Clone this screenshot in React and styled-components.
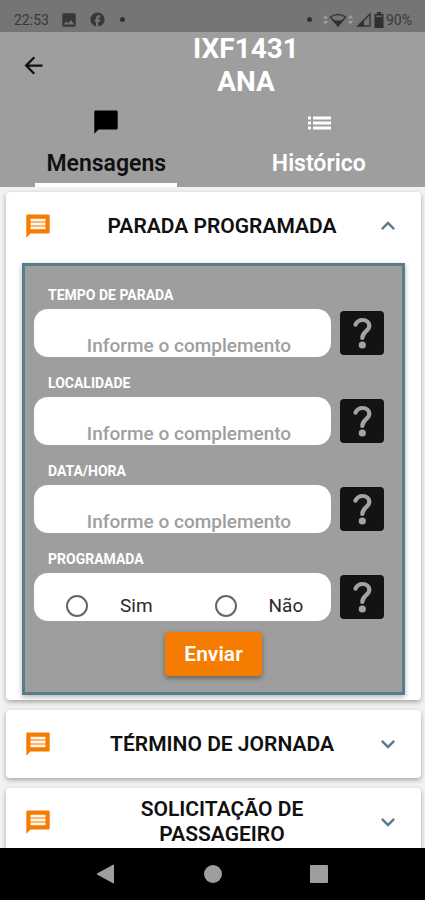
import React, { useState } from "react";
import styled, { createGlobalStyle } from "styled-components";
import {
  MdArrowBack,
  MdExpandLess,
  MdExpandMore,
  MdFacebook,
  MdImage,
} from "react-icons/md";

const colors = {
  status: "#757575",
  gray: "#9e9e9e",
  slate: "#5b7b8b",
  orange: "#f57c00",
  ink: "#101010",
};

const GlobalStyle = createGlobalStyle`
  *, *::before, *::after { box-sizing: border-box; }
  body { margin: 0; background: #f2f2f2; }
  button, input { font: inherit; color: inherit; }
  button { border: 0; padding: 0; background: none; cursor: pointer; }
  svg { display: block; flex: none; }
`;

const Screen = styled.div`
  display: flex;
  flex-direction: column;
  height: 100vh;
  font-family: Roboto, "Liberation Sans", sans-serif;
  background: #f2f2f2;
`;

const StatusBar = styled.div`
  display: flex;
  flex: none;
  justify-content: space-between;
  align-items: center;
  height: 32px;
  padding: 7px 13px 0 14px;
  background: ${colors.status};
  color: #383838;
  font-size: 14px;
  line-height: 16px;
`;

const StatusGroup = styled.div`
  display: flex;
  align-items: center;
  gap: ${(p) => p.$gap}px;
`;

const Dot = styled.span`
  width: 5px;
  height: 5px;
  margin: 0 ${(p) => p.$space || 0}px;
  border-radius: 50%;
  background: #303030;
`;

const Header = styled.header`
  flex: none;
  background: ${colors.gray};
`;

const TitleRow = styled.div`
  display: flex;
  align-items: center;
`;

const BackButton = styled.button`
  display: flex;
  justify-content: center;
  align-items: center;
  width: 67px;
  height: 66px;
`;

const Title = styled.h1`
  flex: 1;
  margin: 0;
  color: #fff;
  font-size: 28px;
  font-weight: 700;
  line-height: 33px;
  text-align: center;
`;

const TitleLine = styled.span`
  display: block;
`;

const Tabs = styled.div`
  display: grid;
  grid-template-columns: 1fr 1fr;
`;

const Tab = styled.button`
  display: flex;
  flex-direction: column;
  align-items: center;
  padding-top: 8px;
  color: ${(p) => (p.$active ? colors.ink : "#fff")};
  font-size: 23px;
  font-weight: 600;
  line-height: 28px;
  &::after {
    content: "";
    width: 67%;
    height: 4px;
    margin-top: 5px;
    background: ${(p) => (p.$active ? "#fff" : "transparent")};
  }
`;

const TabIcon = styled.span`
  display: flex;
  align-items: center;
  height: 32px;
  margin-bottom: 12px;
  color: ${(p) => (p.$active ? "#000" : "#fff")};
`;

const Content = styled.main`
  display: flex;
  flex: 1;
  flex-direction: column;
  gap: 10px;
  min-height: 0;
  padding: 5px 4px 10px 6px;
  overflow-y: auto;
  scrollbar-width: none;
`;

const Card = styled.section`
  flex: none;
  border-radius: 4px;
  background: #fff;
  box-shadow: 0 2px 5px rgba(0, 0, 0, 0.32);
`;

const CardHeader = styled.button`
  display: flex;
  align-items: center;
  width: 100%;
  min-height: 68px;
  padding: 0 19px 0 18px;
  color: ${colors.slate};
`;

const CardIcon = styled.span`
  color: ${colors.orange};
`;

const CardTitle = styled.span`
  flex: 1;
  padding: 0 10px 0 28px;
  color: ${colors.ink};
  font-size: 21px;
  font-weight: 600;
  line-height: 25px;
  text-align: center;
`;

const CardBody = styled.div`
  padding: 3px 16px 5px;
`;

const Form = styled.form`
  display: flex;
  flex-direction: column;
  gap: 11px;
  padding: 17px 18px 16px 9px;
  border: 3px solid ${colors.slate};
  background: ${colors.gray};
  box-shadow: 0 2px 5px rgba(0, 0, 0, 0.3);
`;

const Fields = styled.div`
  display: flex;
  flex-direction: column;
  gap: 14px;
`;

const Field = styled.div`
  display: flex;
  flex-direction: column;
  gap: 2px;
`;

const FieldLabel = styled.label`
  padding-left: 14px;
  color: #fff;
  font-size: 14px;
  font-weight: 700;
  line-height: 24px;
`;

const FieldRow = styled.div`
  display: flex;
  align-items: center;
  gap: 9px;
`;

const TextBox = styled.input`
  flex: 1;
  min-width: 0;
  height: 48px;
  padding: 24px 0 0 13px;
  border: 0;
  border-radius: 14px;
  outline: 0;
  background: #fff;
  color: ${colors.ink};
  font-size: 19px;
  font-weight: 500;
  text-align: center;
  &::placeholder {
    color: ${colors.gray};
    opacity: 1;
  }
`;

const Choices = styled.div`
  display: grid;
  flex: 1;
  grid-template-columns: 1fr 1fr;
  height: 48px;
  padding-top: 18px;
  border-radius: 14px;
  background: #fff;
`;

const Choice = styled.label`
  display: flex;
  align-items: center;
  gap: 32px;
  padding-left: 32px;
  color: #2a2a2a;
  font-size: 19px;
  line-height: 30px;
`;

const Radio = styled.input`
  appearance: none;
  width: 22px;
  height: 22px;
  margin: 0;
  border: 2px solid #666;
  border-radius: 50%;
  &:checked {
    background: radial-gradient(${colors.orange} 45%, transparent 50%);
  }
`;

const HelpButton = styled.button`
  flex: none;
  width: 44px;
  height: 44px;
  border-radius: 4px;
  background: #131313;
`;

const SubmitButton = styled.button`
  align-self: center;
  height: 44px;
  margin-left: 9px;
  padding: 0 19px;
  border-radius: 4px;
  background: ${colors.orange};
  box-shadow: 0 2px 5px rgba(0, 0, 0, 0.4);
  color: #fff;
  font-size: 21px;
  font-weight: 600;
`;

const SystemNav = styled.nav`
  display: grid;
  flex: none;
  grid-template-columns: repeat(3, 25%);
  justify-content: center;
  height: 52px;
  background: #000;
`;

const NavButton = styled.button`
  display: flex;
  justify-content: center;
  align-items: center;
`;

function Wifi() {
  return (
    <svg width="30" height="16" viewBox="0 0 30 16" aria-hidden="true">
      <path d="M0 6.500L2.500 3L5 6.500ZM0 9L2.500 12.500L5 9ZM25 6.500L27.500 3L30 6.500ZM25 9L27.500 12.500L30 9Z" fill="#a0a0a0" />
      <path d="M7.500 5C12 1.500 18 1.500 22.500 5L15 14Z" fill="none" stroke="#383838" strokeWidth="1.500" />
      <path d="M8.500 7C12.500 9 17.500 9 21.500 7L15 14Z" fill="#303030" />
    </svg>
  );
}

function Signal() {
  return (
    <svg width="15" height="15" viewBox="0 0 15 15" aria-hidden="true">
      <path d="M2 14L14 2V14Z" fill="none" stroke="#383838" strokeWidth="1.500" />
      <path d="M1 14.500L8 7.500V14.500Z" fill="#303030" />
    </svg>
  );
}

function Battery() {
  return (
    <svg width="10" height="16" viewBox="0 0 10 16" aria-hidden="true">
      <path d="M3 0H7V2H9.500V16H0.500V2H3Z" fill="#303030" />
      <path d="M2 3.500H8V5H2Z" fill="#666" />
    </svg>
  );
}

function Bubble({ lined }) {
  return (
    <svg width="28" height="28" viewBox="0 0 28 28" fill="currentColor" aria-hidden="true">
      <path d="M3.500 2.500H24.500Q25.700 2.500 25.700 3.700V20.300Q25.700 21.500 24.500 21.500H6.500L2.300 25.700V3.700Q2.300 2.500 3.500 2.500Z" />
      {lined && <path d="M6.500 6.800H21.500V9.600H6.500ZM6.500 10.600H21.500V13.400H6.500ZM6.500 14.400H21.500V17.200H6.500Z" fill="#fff6e8" />}
    </svg>
  );
}

function ListIcon() {
  return (
    <svg width="24" height="24" viewBox="0 0 24 24" fill="currentColor" aria-hidden="true">
      <path d="M1 6.500H4V9.500H1ZM1 11.500H4V14.500H1ZM1 16.500H4V19.500H1ZM6 6.500H24V9.500H6ZM6 11.500H24V14.500H6ZM6 16.500H24V19.500H6Z" />
    </svg>
  );
}

function Help({ field }) {
  return (
    <HelpButton type="button" aria-label={`Ajuda: ${field}`}>
      <svg width="44" height="44" viewBox="0 0 44 44" aria-hidden="true">
        <path
          d="M15.500 13.500C17 10.500 19.500 9 22.500 9C26.500 9 29.300 11.500 29.300 15C29.300 20 22.300 20.500 22.300 27"
          fill="none"
          stroke="#a3a3a3"
          strokeWidth="4.200"
          strokeLinecap="round"
        />
        <circle cx="22.300" cy="34" r="3.600" fill="#a3a3a3" />
      </svg>
    </HelpButton>
  );
}

function TextField({ id, label }) {
  return (
    <Field>
      <FieldLabel htmlFor={id}>{label}</FieldLabel>
      <FieldRow>
        <TextBox id={id} type="text" placeholder="Informe o complemento" />
        <Help field={label} />
      </FieldRow>
    </Field>
  );
}

function StopForm() {
  return (
    <Form onSubmit={(e) => e.preventDefault()}>
      <Fields>
        <TextField id="tempo" label="TEMPO DE PARADA" />
        <TextField id="localidade" label="LOCALIDADE" />
        <TextField id="data" label="DATA/HORA" />
        <Field>
          <FieldLabel as="div" id="programada">PROGRAMADA</FieldLabel>
          <FieldRow>
            <Choices role="radiogroup" aria-labelledby="programada">
              <Choice>
                <Radio type="radio" name="programada" value="sim" />
                Sim
              </Choice>
              <Choice>
                <Radio type="radio" name="programada" value="nao" />
                Não
              </Choice>
            </Choices>
            <Help field="PROGRAMADA" />
          </FieldRow>
        </Field>
      </Fields>
      <SubmitButton type="submit">Enviar</SubmitButton>
    </Form>
  );
}

function MessageCard({ title, open, onToggle, children }) {
  const Chevron = open ? MdExpandLess : MdExpandMore;
  return (
    <Card>
      <CardHeader type="button" aria-expanded={open} onClick={onToggle}>
        <CardIcon>
          <Bubble lined />
        </CardIcon>
        <CardTitle>{title}</CardTitle>
        <Chevron size={28} />
      </CardHeader>
      {open && children && <CardBody>{children}</CardBody>}
    </Card>
  );
}

const messages = [
  { title: "PARADA PROGRAMADA", body: <StopForm /> },
  { title: "TÉRMINO DE JORNADA" },
  { title: "SOLICITAÇÃO DE PASSAGEIRO" },
];

export default function App() {
  const [tab, setTab] = useState(0);
  const [open, setOpen] = useState(0);
  return (
    <Screen>
      <GlobalStyle />
      <StatusBar>
        <StatusGroup $gap={11}>
          <span>22:53</span>
          <MdImage size={18} />
          <MdFacebook size={17} />
          <Dot $space={3} />
        </StatusGroup>
        <StatusGroup $gap={3}>
          <Dot $space={8} />
          <Wifi />
          <Signal />
          <StatusGroup $gap={2}>
            <Battery />
            <span>90%</span>
          </StatusGroup>
        </StatusGroup>
      </StatusBar>
      <Header>
        <TitleRow>
          <BackButton type="button" aria-label="Voltar">
            <MdArrowBack size={27} color="#101010" />
          </BackButton>
          <Title>
            <TitleLine>IXF1431</TitleLine>
            <TitleLine>ANA</TitleLine>
          </Title>
        </TitleRow>
        <Tabs role="tablist">
          <Tab type="button" role="tab" aria-selected={tab === 0} $active={tab === 0} onClick={() => setTab(0)}>
            <TabIcon $active={tab === 0}>
              <Bubble />
            </TabIcon>
            Mensagens
          </Tab>
          <Tab type="button" role="tab" aria-selected={tab === 1} $active={tab === 1} onClick={() => setTab(1)}>
            <TabIcon $active={tab === 1}>
              <ListIcon />
            </TabIcon>
            Histórico
          </Tab>
        </Tabs>
      </Header>
      <Content>
        {messages.map((m, i) => (
          <MessageCard key={m.title} title={m.title} open={open === i} onToggle={() => setOpen(open === i ? -1 : i)}>
            {m.body}
          </MessageCard>
        ))}
      </Content>
      <SystemNav>
        <NavButton type="button" aria-label="Voltar">
          <svg width="20" height="20" viewBox="0 0 20 20">
            <path d="M1 10L17.500 1V19Z" fill="#9e9e9e" stroke="#9e9e9e" strokeLinejoin="round" />
          </svg>
        </NavButton>
        <NavButton type="button" aria-label="Início">
          <svg width="20" height="20" viewBox="0 0 20 20">
            <circle cx="10" cy="10" r="9" fill="#9e9e9e" />
          </svg>
        </NavButton>
        <NavButton type="button" aria-label="Recentes">
          <svg width="20" height="20" viewBox="0 0 20 20">
            <rect x="1" y="1" width="18" height="18" rx="1" fill="#9e9e9e" />
          </svg>
        </NavButton>
      </SystemNav>
    </Screen>
  );
}
